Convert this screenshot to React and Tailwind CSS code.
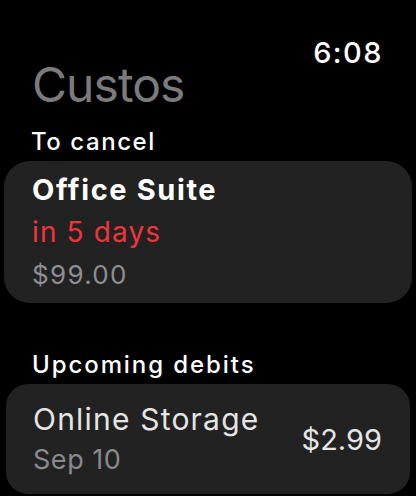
import React from "react";

export default function App() {
  return (
    <div
      className="w-[416px] h-[496px] bg-black overflow-hidden text-white"
      style={{ fontFamily: "Inter, 'Noto Sans', sans-serif" }}
    >
      <div className="pt-[38px] pr-[33px] text-right text-[29px] leading-none font-medium tracking-[0.05em]">
        6:08
      </div>
      <div className="mt-[-6px] pl-[32px] text-[48px] leading-none text-[#7b7b7b] tracking-[-0.02em]">
        Custos
      </div>
      <div className="mt-[21px] pl-[31px] text-[24px] leading-none font-medium tracking-[0.065em]">
        To cancel
      </div>
      <div className="mt-[7px] mx-[4px] h-[142px] rounded-[26px] bg-[#222222] pt-[14px] pl-[28px]">
        <div className="text-[29px] leading-none font-bold tracking-[0.055em]">Office Suite</div>
        <div className="mt-[14px] text-[28px] leading-none text-[#f1343c] tracking-[0.04em]">in 5 days</div>
        <div className="mt-[16px] text-[26px] leading-none text-[#8e8e93] tracking-[0.05em]">$99.00</div>
      </div>
      <div className="mt-[50px] pl-[32px] text-[24px] leading-none font-medium tracking-[0.08em]">
        Upcoming debits
      </div>
      <div className="mt-[7px] mx-[6px] h-[110px] rounded-[22px] bg-[#222222] pl-[27px] pr-[28px] flex items-center justify-between">
        <div className="pb-[2px]">
          <div className="text-[30px] leading-none text-[#e5e5e5] tracking-[0.04em]">Online Storage</div>
          <div className="mt-[12px] text-[27px] leading-none text-[#8a8a8e] tracking-[0.02em]">Sep 10</div>
        </div>
        <div className="text-[29px] leading-none text-[#e5e5e5]">$2.99</div>
      </div>
    </div>
  );
}
